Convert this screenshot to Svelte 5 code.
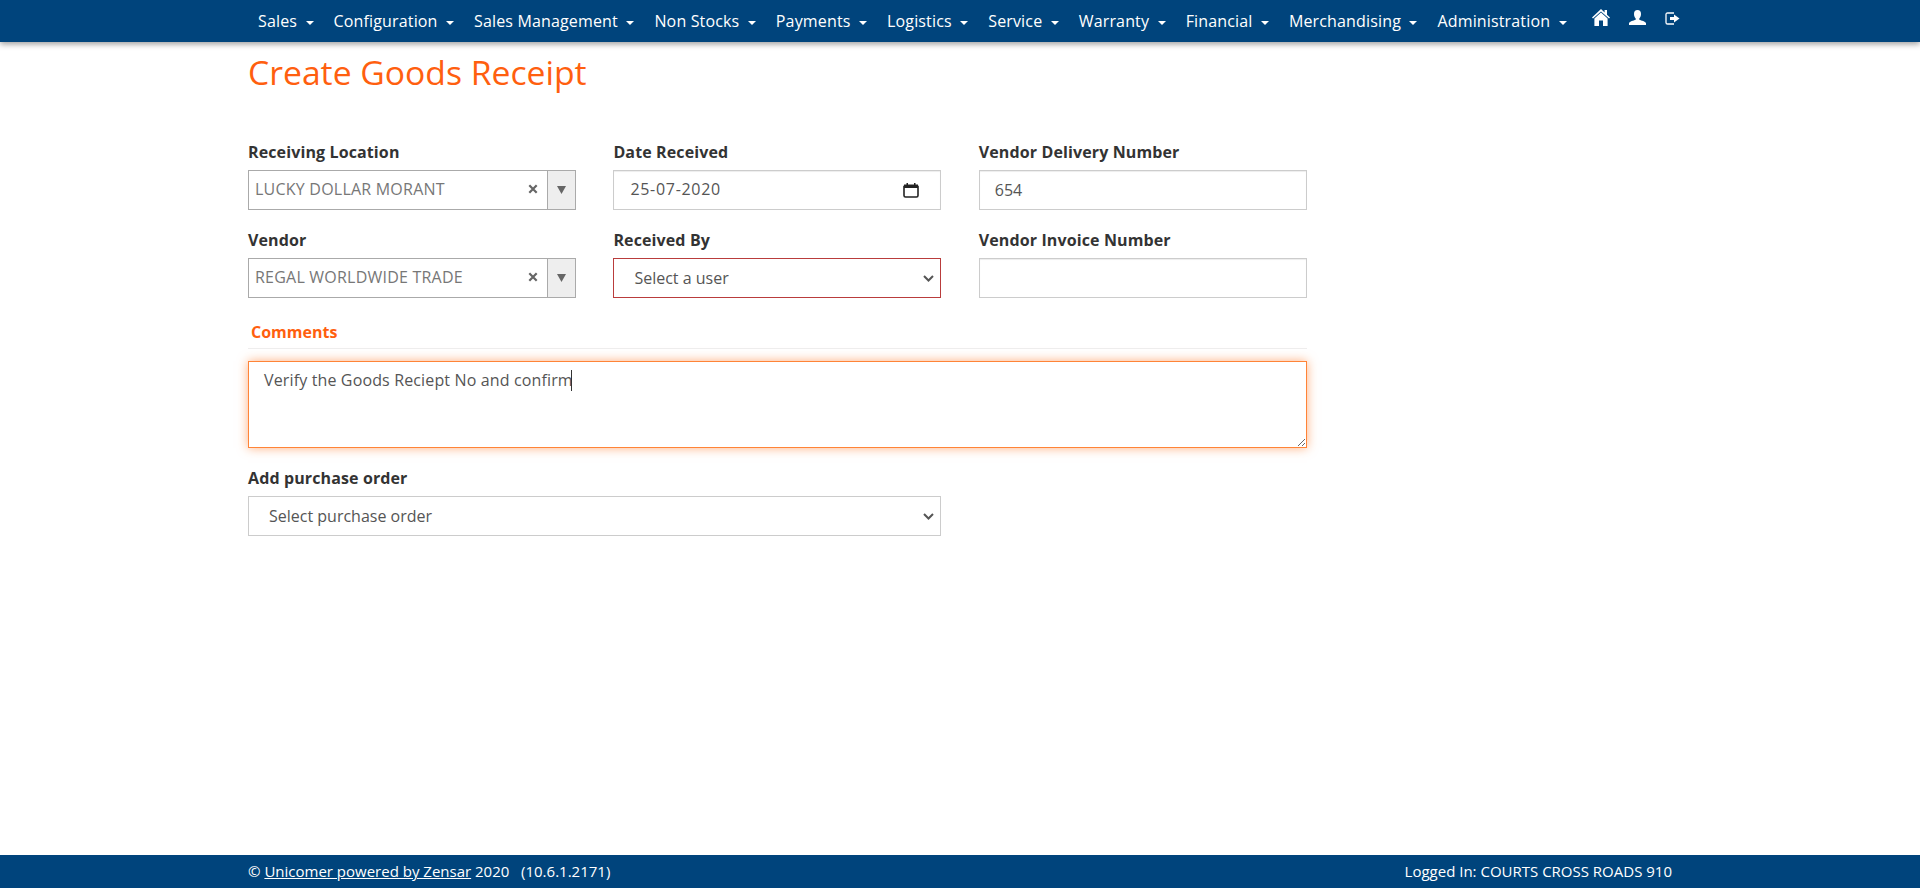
<script>
  const menus = ['Sales', 'Configuration', 'Sales Management', 'Non Stocks', 'Payments', 'Logistics', 'Service', 'Warranty', 'Financial', 'Merchandising', 'Administration'];
</script>

<div class="page">
  <nav class="navbar">
    <ul class="menu">
      {#each menus as item}
        <li><a href="#top">{item}<span class="caret"></span></a></li>
      {/each}
    </ul>
    <div class="nav-icons">
      <!-- home -->
      <svg class="home" width="18" height="17" viewBox="0 0 18 17" fill="#fff" aria-hidden="true">
        <path d="M9 0 L12.6 3.4 V1 H15 V5.7 L18 8.5 L17 9.6 L9 2.4 L1 9.6 L0 8.5 Z" />
        <path d="M9 3.6 L15.6 9.5 V17 H11 V11.5 H7 V17 H2.4 V9.5 Z" />
      </svg>
      <!-- user -->
      <svg class="user" width="17" height="15" viewBox="0 0 17 15" fill="#fff" aria-hidden="true">
        <path d="M8.5 0 C10.8 0 12 1.7 12 3.9 C12 6 11.1 7.6 10.3 8.4 V9.7 C12.6 10.6 16.2 11.2 17 13 V15 H0 V13 C0.8 11.2 4.4 10.6 6.7 9.7 V8.4 C5.9 7.6 5 6 5 3.9 C5 1.7 6.2 0 8.5 0 Z" />
      </svg>
      <!-- log out -->
      <svg class="logout" width="15" height="13" viewBox="0 0 15 13" aria-hidden="true">
        <path d="M9 1 H2.6 Q1 1 1 2.6 V10.4 Q1 12 2.6 12 H9" fill="none" stroke="#fff" stroke-width="1.3" />
        <path d="M5 5 H9 V2.4 L14.5 6.5 L9 10.6 V8 H5 Z" fill="#fff" />
      </svg>
    </div>
  </nav>

  <main class="content">
    <h1>Create Goods Receipt</h1>

    <div class="form-grid">
      <div class="field">
        <label for="location">Receiving Location</label>
        <div class="combo">
          <input id="location" value="LUCKY DOLLAR MORANT" readonly />
          <svg class="clear" width="10" height="10" viewBox="0 0 10 10" aria-hidden="true"><path d="M1.3 1.3 L8.7 8.7 M8.7 1.3 L1.3 8.7" stroke="#666" stroke-width="2.2" /></svg>
          <span class="combo-arrow"><svg width="9" height="8" viewBox="0 0 9 8" aria-hidden="true"><path d="M0 0 H9 L4.5 8 Z" fill="#666" /></svg></span>
        </div>
      </div>

      <div class="field">
        <label for="date">Date Received</label>
        <div class="date-wrap">
          <input id="date" class="control date" value="25-07-2020" readonly />
          <svg class="calendar" width="16" height="16" viewBox="0 0 16 16" aria-hidden="true">
            <path d="M1 4.5 H15 V13.5 Q15 15 13.5 15 H2.5 Q1 15 1 13.5 Z" fill="none" stroke="#222" stroke-width="1.6" />
            <path d="M1 2.5 H15 V6 H1 Z" fill="#222" />
            <path d="M3.5 1 H5 V3 H3.5 Z M11 1 H12.5 V3 H11 Z" fill="#222" />
          </svg>
        </div>
      </div>

      <div class="field">
        <label for="delivery">Vendor Delivery Number</label>
        <input id="delivery" class="control" value="654" readonly />
      </div>

      <div class="field">
        <label for="vendor">Vendor</label>
        <div class="combo">
          <input id="vendor" value="REGAL WORLDWIDE TRADE" readonly />
          <svg class="clear" width="10" height="10" viewBox="0 0 10 10" aria-hidden="true"><path d="M1.3 1.3 L8.7 8.7 M8.7 1.3 L1.3 8.7" stroke="#666" stroke-width="2.2" /></svg>
          <span class="combo-arrow"><svg width="9" height="8" viewBox="0 0 9 8" aria-hidden="true"><path d="M0 0 H9 L4.5 8 Z" fill="#666" /></svg></span>
        </div>
      </div>

      <div class="field">
        <label for="user">Received By</label>
        <select id="user" class="control invalid">
          <option>Select a user</option>
        </select>
      </div>

      <div class="field">
        <label for="invoice">Vendor Invoice Number</label>
        <input id="invoice" class="control" readonly />
      </div>
    </div>

    <div class="section-title">Comments</div>
    <div class="comments">
      <textarea aria-label="Comments" readonly>Verify the Goods Reciept No and confirm</textarea>
      <span class="text-caret"></span>
    </div>

    <div class="field purchase">
      <label for="po">Add purchase order</label>
      <select id="po" class="control">
        <option>Select purchase order</option>
      </select>
    </div>
  </main>

  <footer class="footer">
    <span>© <a href="#top">Unicomer powered by Zensar</a> 2020 &nbsp; (10.6.1.2171)</span>
    <span>Logged In: COURTS CROSS ROADS 910</span>
  </footer>
</div>

<style>
  :global(body) {
    margin: 0;
    background: #fff;
    font-family: "Open Sans", "Liberation Sans", sans-serif;
    font-size: 16px;
    color: #333;
  }

  .page {
    display: flex;
    flex-direction: column;
    min-height: 888px;
  }

  .navbar {
    display: flex;
    height: 42px;
    padding-left: 248px;
    background: #00447c;
    box-shadow: 0 2px 6px rgba(0, 0, 0, 0.4);
  }

  .menu {
    display: flex;
    margin: 0;
    padding: 0;
    list-style: none;
  }

  .menu a {
    display: block;
    padding: 10px 10px;
    line-height: 22px;
    letter-spacing: 0.15px;
    color: #fff;
    text-decoration: none;
  }

  .caret {
    display: inline-block;
    margin-left: 8.5px;
    vertical-align: middle;
    border-top: 4px solid #fff;
    border-left: 4px solid transparent;
    border-right: 4px solid transparent;
  }

  .nav-icons {
    display: flex;
    align-items: flex-start;
    margin-left: 15px;
  }

  .home {
    margin-top: 9px;
  }

  .user {
    margin: 10px 0 0 19px;
  }

  .logout {
    margin: 12px 0 0 19px;
  }

  .content {
    flex: 1;
    width: 1059px;
    margin-left: 248px;
  }

  h1 {
    margin: 8px 0 46px;
    font-size: 33.7px;
    line-height: 44px;
    font-weight: 400;
    color: #ff5f0f;
  }

  .form-grid {
    display: grid;
    grid-template-columns: repeat(3, 328px);
    column-gap: 37.4px;
    row-gap: 18px;
  }

  label {
    display: block;
    margin-bottom: 6px;
    line-height: 24px;
    font-weight: 700;
    letter-spacing: 0.12px;
    color: #333;
  }

  .control {
    display: block;
    box-sizing: border-box;
    width: 100%;
    height: 40px;
    padding: 6px 15px;
    border: 1px solid #ccc;
    border-radius: 0;
    background: #fff;
    font: inherit;
    color: #555;
    outline: none;
    box-shadow: inset 0 1px 1px rgba(0, 0, 0, 0.075);
  }

  select.control {
    padding-left: 20px;
    appearance: none;
    box-shadow: none;
    background: #fff url("data:image/svg+xml,%3Csvg xmlns='http://www.w3.org/2000/svg' width='11' height='7' viewBox='0 0 11 7'%3E%3Cpath d='M1 1 L5.5 5.5 L10 1' fill='none' stroke='%23555' stroke-width='2'/%3E%3C/svg%3E") no-repeat right 6px center;
  }

  .invalid {
    border-color: #b93c3c;
  }

  .date-wrap {
    position: relative;
  }

  .date {
    padding: 5px 15px 7px 16px;
    letter-spacing: 0.7px;
  }

  .calendar {
    position: absolute;
    top: 12px;
    right: 22px;
  }

  .combo {
    display: flex;
    align-items: center;
    box-sizing: border-box;
    height: 40px;
    border: 1px solid #aaa;
    background: #fff;
  }

  .combo input {
    flex: 1;
    min-width: 0;
    padding: 0 0 2px 6px;
    border: 0;
    font: inherit;
    letter-spacing: 0.22px;
    color: #777;
    outline: none;
  }

  .clear {
    margin: 0 9px 2px 0;
  }

  .combo-arrow {
    display: flex;
    align-items: center;
    justify-content: center;
    align-self: stretch;
    width: 27px;
    border-left: 1px solid #aaa;
    background: #eee;
  }

  .section-title {
    margin-top: 22px;
    padding: 0 0 4px 3px;
    line-height: 24px;
    font-weight: 700;
    color: #ff5f0f;
    border-bottom: 1px solid #eee;
  }

  .comments {
    position: relative;
    margin-top: 12px;
  }

  textarea {
    display: block;
    box-sizing: border-box;
    width: 100%;
    height: 87px;
    padding: 6px 15px;
    border: 1px solid #ff8437;
    border-radius: 0;
    font: inherit;
    line-height: 24px;
    letter-spacing: 0.14px;
    color: #555;
    outline: none;
    resize: vertical;
    box-shadow: 0 0 10px rgba(255, 122, 40, 0.6);
  }

  .text-caret {
    position: absolute;
    top: 9px;
    left: 323px;
    width: 1px;
    height: 21px;
    background: #333;
  }

  .purchase {
    width: 693.4px;
    margin-top: 18px;
  }

  .footer {
    display: flex;
    justify-content: space-between;
    height: 33px;
    padding: 0 248px;
    line-height: 33px;
    font-size: 15px;
    background: #00447c;
    color: #fff;
  }

  .footer a {
    color: #fff;
  }
</style>
